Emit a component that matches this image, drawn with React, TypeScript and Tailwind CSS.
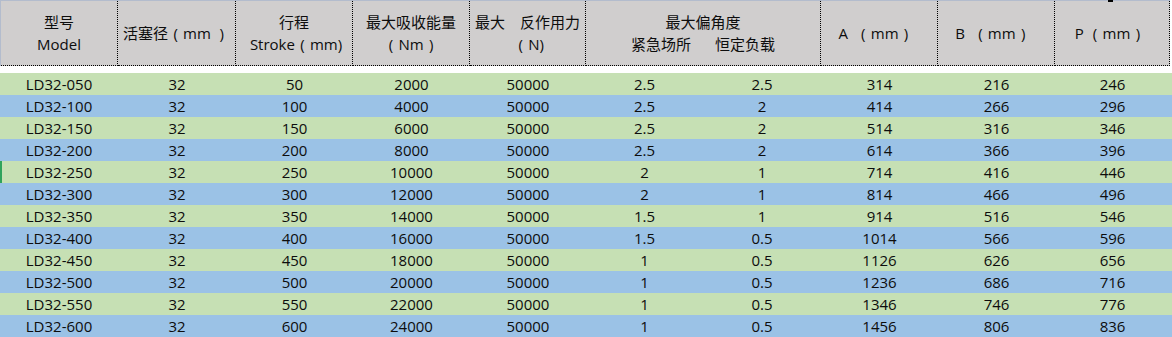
const rows = [
  ["LD32-050", "32", "50", "2000", "50000", "2.5", "2.5", "314", "216", "246"],
  ["LD32-100", "32", "100", "4000", "50000", "2.5", "2", "414", "266", "296"],
  ["LD32-150", "32", "150", "6000", "50000", "2.5", "2", "514", "316", "346"],
  ["LD32-200", "32", "200", "8000", "50000", "2.5", "2", "614", "366", "396"],
  ["LD32-250", "32", "250", "10000", "50000", "2", "1", "714", "416", "446"],
  ["LD32-300", "32", "300", "12000", "50000", "2", "1", "814", "466", "496"],
  ["LD32-350", "32", "350", "14000", "50000", "1.5", "1", "914", "516", "546"],
  ["LD32-400", "32", "400", "16000", "50000", "1.5", "0.5", "1014", "566", "596"],
  ["LD32-450", "32", "450", "18000", "50000", "1", "0.5", "1126", "626", "656"],
  ["LD32-500", "32", "500", "20000", "50000", "1", "0.5", "1236", "686", "716"],
  ["LD32-550", "32", "550", "22000", "50000", "1", "0.5", "1346", "746", "776"],
  ["LD32-600", "32", "600", "24000", "50000", "1", "0.5", "1456", "806", "836"],
];

const hcell =
  "flex flex-col items-center justify-center border-r border-b border-dotted border-black h-[65px] leading-[22px] whitespace-nowrap";

// full-width bracket, glyph centred in a 1em box
function P({ c }: { c: string }) {
  return <span className="inline-block w-[15px] text-center">{c}</span>;
}

export default function App() {
  return (
    <div className="w-[1172px] h-[337px] overflow-hidden bg-white text-[15px] text-[#0d0d0d] font-['Open_Sans','Noto_Sans_CJK_SC',sans-serif]">
      {/* HEADER */}
      <div className="relative w-[1170px] border-l border-t border-[#b3bccd] bg-[#d0cece] grid grid-cols-[117px_118px_117px_117px_116px_235px_117px_117px_115px]">
        <div className={hcell}>
          <span>型号</span>
          <span>Model</span>
        </div>
        <div className={hcell}>
          <span className="pr-[6px]">
            活塞径
            <P c="(" />
            mm
            <span className="inline-block w-[13px] text-right">)</span>
          </span>
        </div>
        <div className={hcell}>
          <span>行程</span>
          <span className="pl-[4px]">
            Stroke
            <P c="(" />
            mm)
          </span>
        </div>
        <div className={hcell}>
          <span>最大吸收能量</span>
          <span>
            <P c="(" />
            Nm
            <P c=")" />
          </span>
        </div>
        <div className={hcell}>
          <span>最大　反作用力</span>
          <span className="pl-[2px]">
            <P c="(" />
            N)
          </span>
        </div>
        <div className={hcell}>
          <span>最大偏角度</span>
          <div className="flex gap-[24px]">
            <span>紧急场所</span>
            <span>恒定负载</span>
          </div>
        </div>
        <div className={hcell}>
          <span className="pr-[6px]">
            A&nbsp;&nbsp;
            <P c="(" />
            mm
            <P c=")" />
          </span>
        </div>
        <div className={hcell}>
          <span className="pr-[6px]">
            B&nbsp;&nbsp;
            <P c="(" />
            mm
            <P c=")" />
          </span>
        </div>
        <div className={hcell}>
          <span className="pr-[4px]">
            P&nbsp;
            <P c="(" />
            mm
            <P c=")" />
          </span>
        </div>
        <span className="absolute -top-px left-[1107px] w-[5px] h-[2px] bg-black" />
      </div>

      {/* ROWS */}
      <div className="mt-[7px]">
        {rows.map((r, i) => (
          <div
            key={r[0]}
            className={`h-[22px] ${i % 2 === 0 ? "bg-[#c6e0b4]" : "bg-[#9bc2e6]"}`}
          >
            <div className="w-[1170px] h-full grid grid-cols-[118px_118px_117px_117px_116px_117px_118px_117px_117px_115px] leading-[22px]">
              {r.map((c, j) => (
                <div
                  key={j}
                  className={`text-center ${
                    i === 4 && j === 0 ? "shadow-[inset_2px_0_0_#2fa35c]" : ""
                  }`}
                >
                  {c}
                </div>
              ))}
            </div>
          </div>
        ))}
      </div>
    </div>
  );
}
